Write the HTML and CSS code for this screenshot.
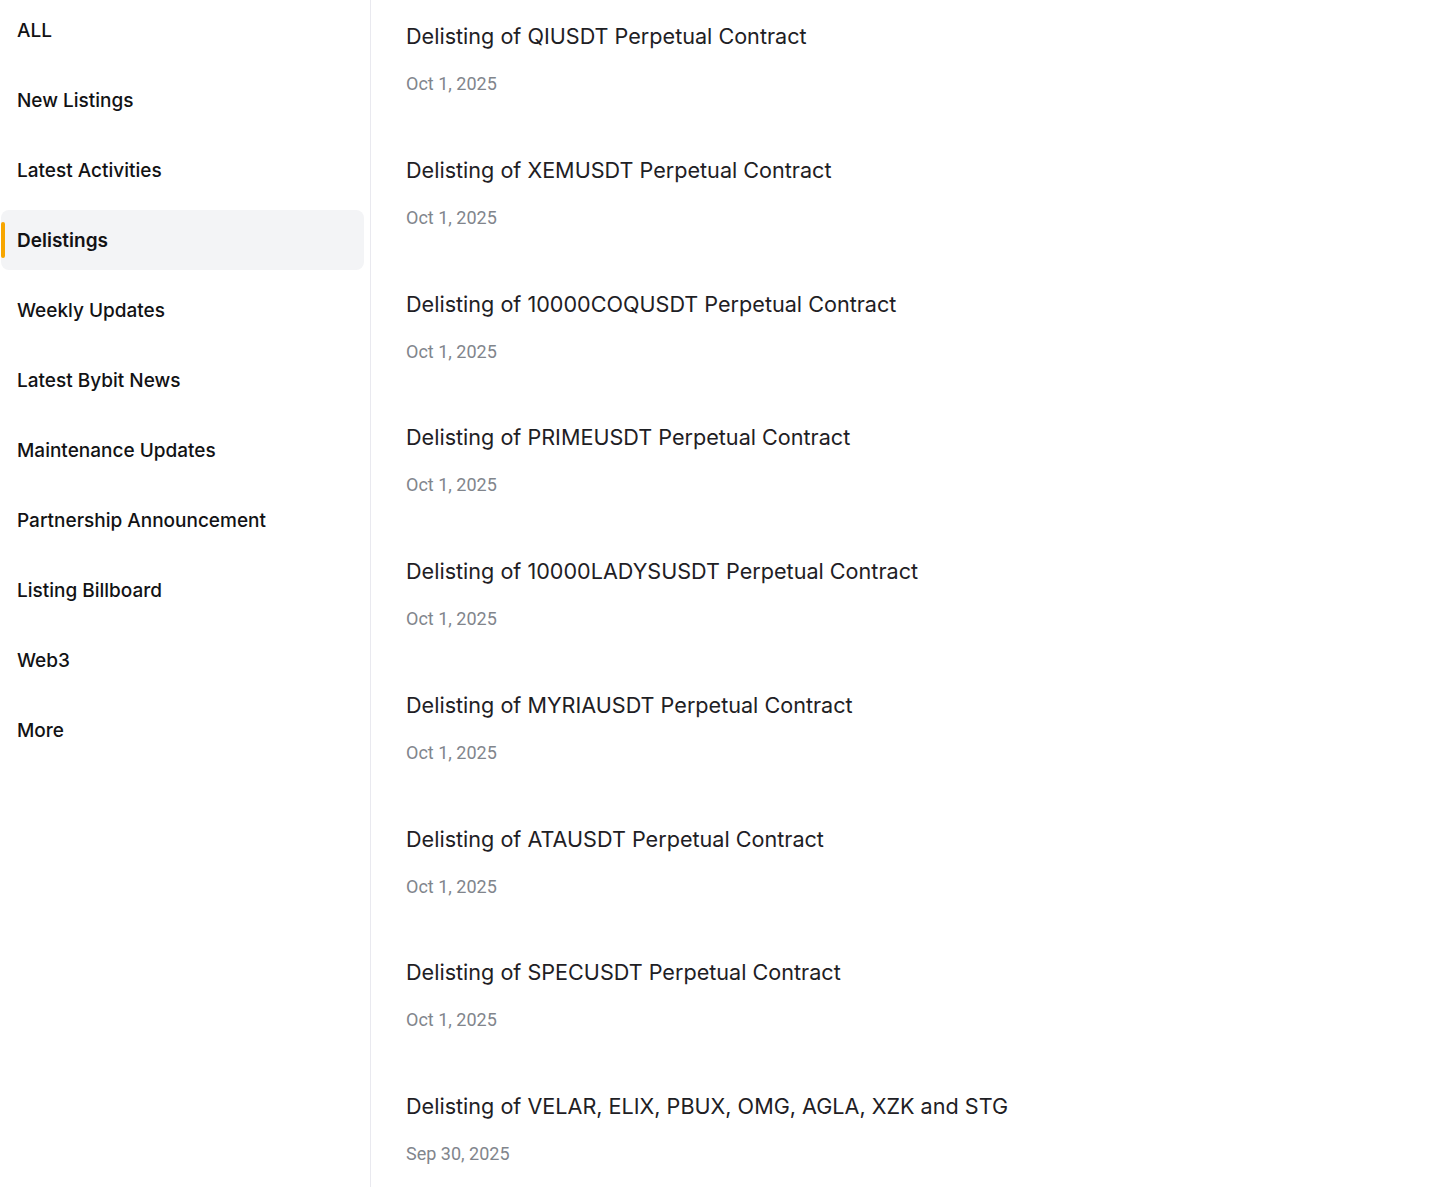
FILE: index.html
```html
<!DOCTYPE html>
<html lang="en">
<head>
<meta charset="utf-8">
<title>Announcements - Delistings</title>
<link rel="stylesheet" href="styles.css">
</head>
<body>
<div class="page">
  <aside class="sidebar">
    <nav class="nav">
      <a class="nav-item">ALL</a>
      <a class="nav-item">New Listings</a>
      <a class="nav-item">Latest Activities</a>
      <a class="nav-item active">Delistings</a>
      <a class="nav-item">Weekly Updates</a>
      <a class="nav-item">Latest Bybit News</a>
      <a class="nav-item">Maintenance Updates</a>
      <a class="nav-item">Partnership Announcement</a>
      <a class="nav-item">Listing Billboard</a>
      <a class="nav-item">Web3</a>
      <a class="nav-item">More</a>
    </nav>
  </aside>
  <main class="list">
    <article class="item"><h3 class="title">Delisting of QIUSDT Perpetual Contract</h3><div class="date">Oct 1, 2025</div></article>
    <article class="item"><h3 class="title">Delisting of XEMUSDT Perpetual Contract</h3><div class="date">Oct 1, 2025</div></article>
    <article class="item"><h3 class="title">Delisting of 10000COQUSDT Perpetual Contract</h3><div class="date">Oct 1, 2025</div></article>
    <article class="item"><h3 class="title">Delisting of PRIMEUSDT Perpetual Contract</h3><div class="date">Oct 1, 2025</div></article>
    <article class="item"><h3 class="title">Delisting of 10000LADYSUSDT Perpetual Contract</h3><div class="date">Oct 1, 2025</div></article>
    <article class="item"><h3 class="title">Delisting of MYRIAUSDT Perpetual Contract</h3><div class="date">Oct 1, 2025</div></article>
    <article class="item"><h3 class="title">Delisting of ATAUSDT Perpetual Contract</h3><div class="date">Oct 1, 2025</div></article>
    <article class="item"><h3 class="title">Delisting of SPECUSDT Perpetual Contract</h3><div class="date">Oct 1, 2025</div></article>
    <article class="item"><h3 class="title">Delisting of VELAR, ELIX, PBUX, OMG, AGLA, XZK and STG</h3><div class="date">Sep 30, 2025</div></article>
  </main>
</div>
</body>
</html>
```

FILE: styles.css
```css
* { box-sizing: border-box; }
html, body { margin: 0; padding: 0; background: #ffffff; }
body {
  font-family: Inter, Roboto, "Liberation Sans", sans-serif;
  color: #121214;
  height: 1187px;
  overflow: hidden;
}
.page {
  display: flex;
  align-items: stretch;
  min-height: 1187px;
}
.sidebar {
  width: 371px;
  flex: none;
  padding-left: 1px;
  padding-right: 6px;
  border-right: 1px solid #e9e9ef;
}
.nav {
  display: flex;
  flex-direction: column;
  gap: 10px;
}
.nav-item {
  position: relative;
  display: flex;
  align-items: center;
  height: 60px;
  padding-left: 16px;
  padding-top: 1px;
  font-size: 19px;
  font-weight: 500;
  color: #121214;
  border-radius: 8px;
  text-decoration: none;
}
.nav-item.active {
  background: #f3f4f6;
  font-weight: 600;
}
.nav-item.active::before {
  content: "";
  position: absolute;
  left: 0;
  top: 12px;
  width: 4px;
  height: 36px;
  background: #f7a600;
  border-radius: 2px;
}
.list {
  flex: 1;
  padding-left: 35px;
}
.item {
  height: 133.75px;
  padding-top: 20px;
}
.title {
  margin: 0;
  font-size: 21.6px;
  line-height: 32px;
  font-weight: 400;
  color: #1e2024;
}
.date {
  margin-top: 16px;
  font-family: Roboto, "Liberation Sans", sans-serif;
  font-size: 18px;
  line-height: 32px;
  color: #81858c;
}
```
